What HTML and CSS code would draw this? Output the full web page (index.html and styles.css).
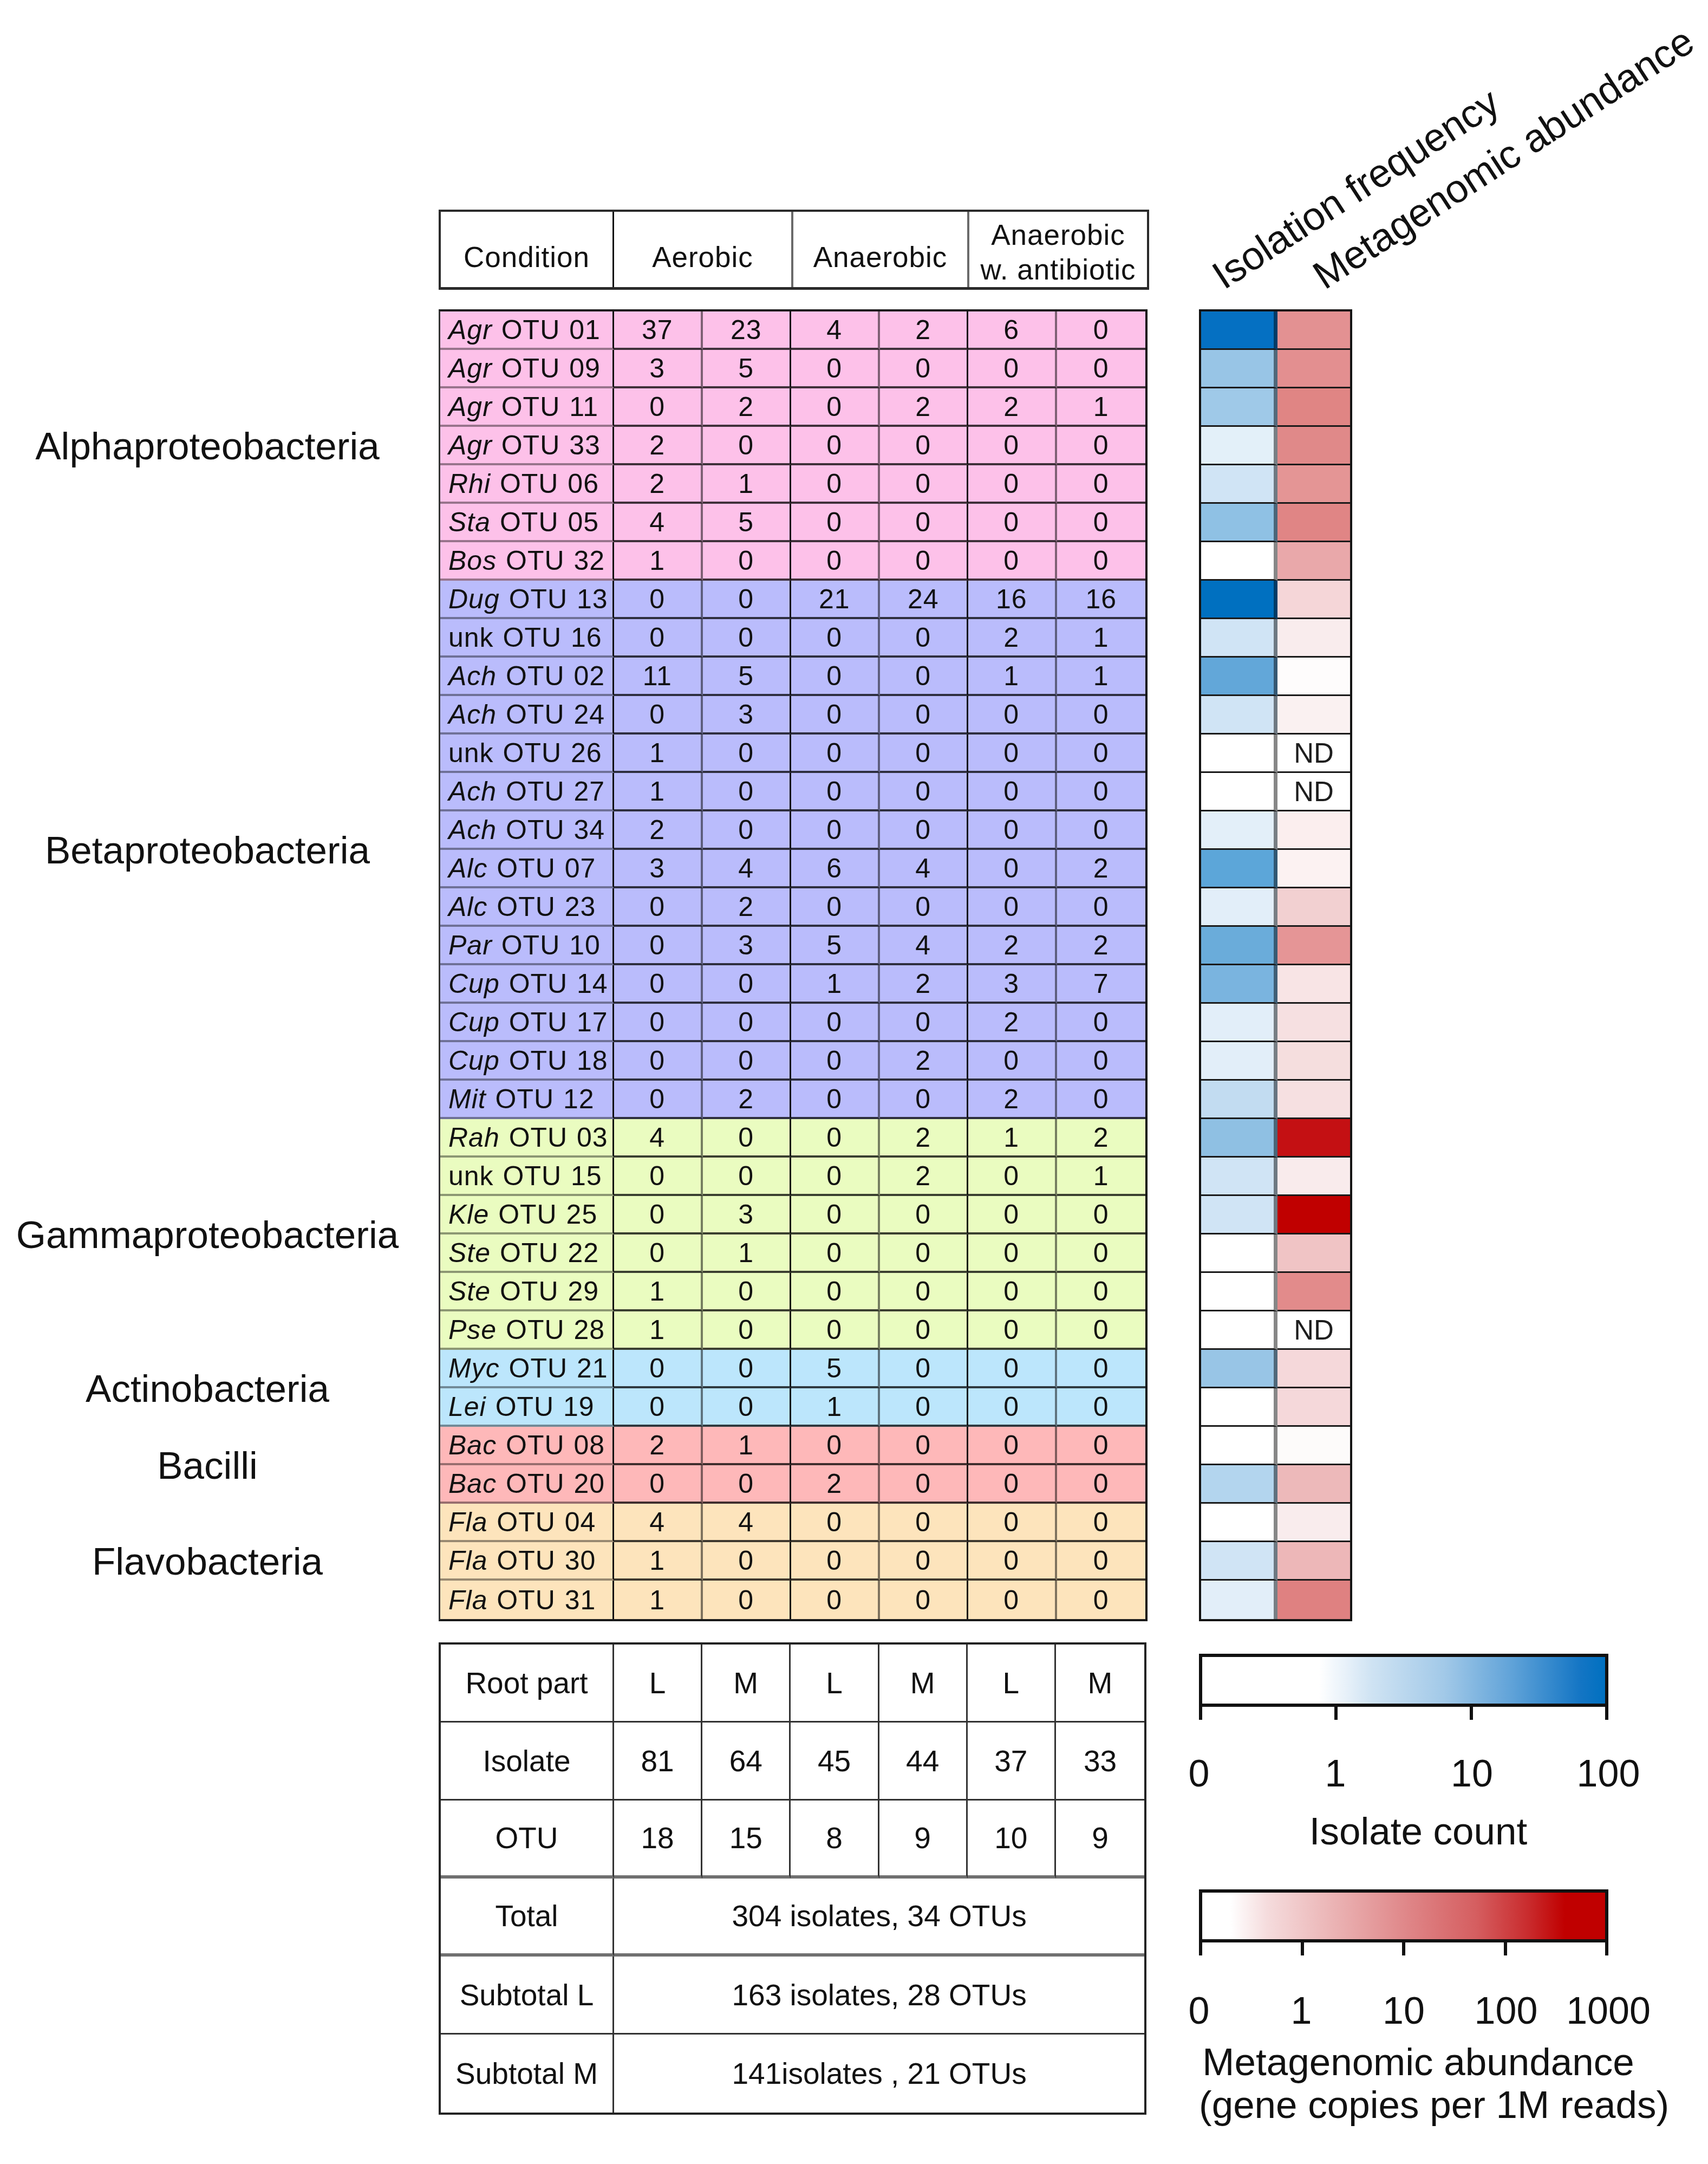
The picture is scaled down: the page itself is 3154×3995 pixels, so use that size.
FILE: index.html
```html
<!DOCTYPE html>
<html lang="en">
<head>
<meta charset="utf-8">
<title>Isolation frequency and metagenomic abundance</title>
<link rel="stylesheet" href="styles.css">
</head>
<body>
<div class="figure">

  <div class="hdr">
    <div class="hc c1 low">Condition</div>
    <div class="hc c2 low">Aerobic</div>
    <div class="hc c3 low">Anaerobic</div>
    <div class="hc c4">Anaerobic<br>w. antibiotic</div>
  </div>

  <div class="rothead">
    <span class="rot rot1">Isolation frequency</span>
    <span class="rot rot2">Metagenomic abundance</span>
  </div>

  <div class="groups">
    <div class="grp s7">Alphaproteobacteria</div>
    <div class="grp s14">Betaproteobacteria</div>
    <div class="grp s6">Gammaproteobacteria</div>
    <div class="grp s2">Actinobacteria</div>
    <div class="grp s2">Bacilli</div>
    <div class="grp s3">Flavobacteria</div>
  </div>

  <div class="data">
    <div class="row ga"><div class="n"><span><i>Agr</i> OTU 01</span></div><div class="v p">37</div><div class="v q">23</div><div class="v p">4</div><div class="v q">2</div><div class="v p">6</div><div class="v e">0</div></div>
    <div class="row ga"><div class="n"><span><i>Agr</i> OTU 09</span></div><div class="v p">3</div><div class="v q">5</div><div class="v p">0</div><div class="v q">0</div><div class="v p">0</div><div class="v e">0</div></div>
    <div class="row ga"><div class="n"><span><i>Agr</i> OTU 11</span></div><div class="v p">0</div><div class="v q">2</div><div class="v p">0</div><div class="v q">2</div><div class="v p">2</div><div class="v e">1</div></div>
    <div class="row ga"><div class="n"><span><i>Agr</i> OTU 33</span></div><div class="v p">2</div><div class="v q">0</div><div class="v p">0</div><div class="v q">0</div><div class="v p">0</div><div class="v e">0</div></div>
    <div class="row ga"><div class="n"><span><i>Rhi</i> OTU 06</span></div><div class="v p">2</div><div class="v q">1</div><div class="v p">0</div><div class="v q">0</div><div class="v p">0</div><div class="v e">0</div></div>
    <div class="row ga"><div class="n"><span><i>Sta</i> OTU 05</span></div><div class="v p">4</div><div class="v q">5</div><div class="v p">0</div><div class="v q">0</div><div class="v p">0</div><div class="v e">0</div></div>
    <div class="row ga"><div class="n"><span><i>Bos</i> OTU 32</span></div><div class="v p">1</div><div class="v q">0</div><div class="v p">0</div><div class="v q">0</div><div class="v p">0</div><div class="v e">0</div></div>

    <div class="row gb"><div class="n"><span><i>Dug</i> OTU 13</span></div><div class="v p">0</div><div class="v q">0</div><div class="v p">21</div><div class="v q">24</div><div class="v p">16</div><div class="v e">16</div></div>
    <div class="row gb"><div class="n"><span>unk OTU 16</span></div><div class="v p">0</div><div class="v q">0</div><div class="v p">0</div><div class="v q">0</div><div class="v p">2</div><div class="v e">1</div></div>
    <div class="row gb"><div class="n"><span><i>Ach</i> OTU 02</span></div><div class="v p">11</div><div class="v q">5</div><div class="v p">0</div><div class="v q">0</div><div class="v p">1</div><div class="v e">1</div></div>
    <div class="row gb"><div class="n"><span><i>Ach</i> OTU 24</span></div><div class="v p">0</div><div class="v q">3</div><div class="v p">0</div><div class="v q">0</div><div class="v p">0</div><div class="v e">0</div></div>
    <div class="row gb"><div class="n"><span>unk OTU 26</span></div><div class="v p">1</div><div class="v q">0</div><div class="v p">0</div><div class="v q">0</div><div class="v p">0</div><div class="v e">0</div></div>
    <div class="row gb"><div class="n"><span><i>Ach</i> OTU 27</span></div><div class="v p">1</div><div class="v q">0</div><div class="v p">0</div><div class="v q">0</div><div class="v p">0</div><div class="v e">0</div></div>
    <div class="row gb"><div class="n"><span><i>Ach</i> OTU 34</span></div><div class="v p">2</div><div class="v q">0</div><div class="v p">0</div><div class="v q">0</div><div class="v p">0</div><div class="v e">0</div></div>
    <div class="row gb"><div class="n"><span><i>Alc</i> OTU 07</span></div><div class="v p">3</div><div class="v q">4</div><div class="v p">6</div><div class="v q">4</div><div class="v p">0</div><div class="v e">2</div></div>
    <div class="row gb"><div class="n"><span><i>Alc</i> OTU 23</span></div><div class="v p">0</div><div class="v q">2</div><div class="v p">0</div><div class="v q">0</div><div class="v p">0</div><div class="v e">0</div></div>
    <div class="row gb"><div class="n"><span><i>Par</i> OTU 10</span></div><div class="v p">0</div><div class="v q">3</div><div class="v p">5</div><div class="v q">4</div><div class="v p">2</div><div class="v e">2</div></div>
    <div class="row gb"><div class="n"><span><i>Cup</i> OTU 14</span></div><div class="v p">0</div><div class="v q">0</div><div class="v p">1</div><div class="v q">2</div><div class="v p">3</div><div class="v e">7</div></div>
    <div class="row gb"><div class="n"><span><i>Cup</i> OTU 17</span></div><div class="v p">0</div><div class="v q">0</div><div class="v p">0</div><div class="v q">0</div><div class="v p">2</div><div class="v e">0</div></div>
    <div class="row gb"><div class="n"><span><i>Cup</i> OTU 18</span></div><div class="v p">0</div><div class="v q">0</div><div class="v p">0</div><div class="v q">2</div><div class="v p">0</div><div class="v e">0</div></div>
    <div class="row gb"><div class="n"><span><i>Mit</i> OTU 12</span></div><div class="v p">0</div><div class="v q">2</div><div class="v p">0</div><div class="v q">0</div><div class="v p">2</div><div class="v e">0</div></div>

    <div class="row gg"><div class="n"><span><i>Rah</i> OTU 03</span></div><div class="v p">4</div><div class="v q">0</div><div class="v p">0</div><div class="v q">2</div><div class="v p">1</div><div class="v e">2</div></div>
    <div class="row gg"><div class="n"><span>unk OTU 15</span></div><div class="v p">0</div><div class="v q">0</div><div class="v p">0</div><div class="v q">2</div><div class="v p">0</div><div class="v e">1</div></div>
    <div class="row gg"><div class="n"><span><i>Kle</i> OTU 25</span></div><div class="v p">0</div><div class="v q">3</div><div class="v p">0</div><div class="v q">0</div><div class="v p">0</div><div class="v e">0</div></div>
    <div class="row gg"><div class="n"><span><i>Ste</i> OTU 22</span></div><div class="v p">0</div><div class="v q">1</div><div class="v p">0</div><div class="v q">0</div><div class="v p">0</div><div class="v e">0</div></div>
    <div class="row gg"><div class="n"><span><i>Ste</i> OTU 29</span></div><div class="v p">1</div><div class="v q">0</div><div class="v p">0</div><div class="v q">0</div><div class="v p">0</div><div class="v e">0</div></div>
    <div class="row gg"><div class="n"><span><i>Pse</i> OTU 28</span></div><div class="v p">1</div><div class="v q">0</div><div class="v p">0</div><div class="v q">0</div><div class="v p">0</div><div class="v e">0</div></div>

    <div class="row gc"><div class="n"><span><i>Myc</i> OTU 21</span></div><div class="v p">0</div><div class="v q">0</div><div class="v p">5</div><div class="v q">0</div><div class="v p">0</div><div class="v e">0</div></div>
    <div class="row gc"><div class="n"><span><i>Lei</i> OTU 19</span></div><div class="v p">0</div><div class="v q">0</div><div class="v p">1</div><div class="v q">0</div><div class="v p">0</div><div class="v e">0</div></div>

    <div class="row gr"><div class="n"><span><i>Bac</i> OTU 08</span></div><div class="v p">2</div><div class="v q">1</div><div class="v p">0</div><div class="v q">0</div><div class="v p">0</div><div class="v e">0</div></div>
    <div class="row gr"><div class="n"><span><i>Bac</i> OTU 20</span></div><div class="v p">0</div><div class="v q">0</div><div class="v p">2</div><div class="v q">0</div><div class="v p">0</div><div class="v e">0</div></div>

    <div class="row gf"><div class="n"><span><i>Fla</i> OTU 04</span></div><div class="v p">4</div><div class="v q">4</div><div class="v p">0</div><div class="v q">0</div><div class="v p">0</div><div class="v e">0</div></div>
    <div class="row gf"><div class="n"><span><i>Fla</i> OTU 30</span></div><div class="v p">1</div><div class="v q">0</div><div class="v p">0</div><div class="v q">0</div><div class="v p">0</div><div class="v e">0</div></div>
    <div class="row gf"><div class="n"><span><i>Fla</i> OTU 31</span></div><div class="v p">1</div><div class="v q">0</div><div class="v p">0</div><div class="v q">0</div><div class="v p">0</div><div class="v e">0</div></div>
  </div>

  <div class="heat">
    <div class="hrow"><div class="hb" style="background:#0570c2"></div><div class="hr" style="background:#e39192"></div></div>
    <div class="hrow"><div class="hb" style="background:#98c5e6"></div><div class="hr" style="background:#e38f90"></div></div>
    <div class="hrow"><div class="hb" style="background:#9fc9e8"></div><div class="hr" style="background:#e08584"></div></div>
    <div class="hrow"><div class="hb" style="background:#e3f0f9"></div><div class="hr" style="background:#e08989"></div></div>
    <div class="hrow"><div class="hb" style="background:#d0e4f5"></div><div class="hr" style="background:#e49595"></div></div>
    <div class="hrow"><div class="hb" style="background:#8fc1e4"></div><div class="hr" style="background:#e08585"></div></div>
    <div class="hrow"><div class="hb" style="background:#ffffff"></div><div class="hr" style="background:#e9a8aa"></div></div>
    <div class="hrow"><div class="hb" style="background:#0070c0"></div><div class="hr" style="background:#f5d6d8"></div></div>
    <div class="hrow"><div class="hb" style="background:#d0e4f5"></div><div class="hr" style="background:#f9eced"></div></div>
    <div class="hrow"><div class="hb" style="background:#62a7d9"></div><div class="hr" style="background:#fefcfc"></div></div>
    <div class="hrow"><div class="hb" style="background:#d0e4f5"></div><div class="hr" style="background:#faf1f1"></div></div>
    <div class="hrow"><div class="hb" style="background:#ffffff"></div><div class="hr nd">ND</div></div>
    <div class="hrow"><div class="hb" style="background:#ffffff"></div><div class="hr nd">ND</div></div>
    <div class="hrow"><div class="hb" style="background:#e3eff9"></div><div class="hr" style="background:#fbeeee"></div></div>
    <div class="hrow"><div class="hb" style="background:#5ca6d9"></div><div class="hr" style="background:#fcf2f2"></div></div>
    <div class="hrow"><div class="hb" style="background:#e2eef9"></div><div class="hr" style="background:#f2d0d1"></div></div>
    <div class="hrow"><div class="hb" style="background:#6aacda"></div><div class="hr" style="background:#e59596"></div></div>
    <div class="hrow"><div class="hb" style="background:#7ab4df"></div><div class="hr" style="background:#f8e4e5"></div></div>
    <div class="hrow"><div class="hb" style="background:#e2eef9"></div><div class="hr" style="background:#f6e0e1"></div></div>
    <div class="hrow"><div class="hb" style="background:#e2eef9"></div><div class="hr" style="background:#f5dede"></div></div>
    <div class="hrow"><div class="hb" style="background:#c2dcf1"></div><div class="hr" style="background:#f6e0e1"></div></div>
    <div class="hrow"><div class="hb" style="background:#8fc0e3"></div><div class="hr" style="background:#c41013"></div></div>
    <div class="hrow"><div class="hb" style="background:#d0e4f5"></div><div class="hr" style="background:#f9ebec"></div></div>
    <div class="hrow"><div class="hb" style="background:#d0e4f5"></div><div class="hr" style="background:#c00000"></div></div>
    <div class="hrow"><div class="hb" style="background:#ffffff"></div><div class="hr" style="background:#f0c4c5"></div></div>
    <div class="hrow"><div class="hb" style="background:#ffffff"></div><div class="hr" style="background:#e28b8b"></div></div>
    <div class="hrow"><div class="hb" style="background:#ffffff"></div><div class="hr nd">ND</div></div>
    <div class="hrow"><div class="hb" style="background:#98c5e6"></div><div class="hr" style="background:#f5d8da"></div></div>
    <div class="hrow"><div class="hb" style="background:#ffffff"></div><div class="hr" style="background:#f5d8da"></div></div>
    <div class="hrow"><div class="hb" style="background:#ffffff"></div><div class="hr" style="background:#fdfbfa"></div></div>
    <div class="hrow"><div class="hb" style="background:#b3d5ee"></div><div class="hr" style="background:#edb9ba"></div></div>
    <div class="hrow"><div class="hb" style="background:#ffffff"></div><div class="hr" style="background:#f9eced"></div></div>
    <div class="hrow"><div class="hb" style="background:#d0e4f5"></div><div class="hr" style="background:#edb7b8"></div></div>
    <div class="hrow"><div class="hb" style="background:#e2eef9"></div><div class="hr" style="background:#df8181"></div></div>
  </div>

  <div class="sum">
    <div class="sc">Root part</div><div class="sc">L</div><div class="sc">M</div><div class="sc">L</div><div class="sc">M</div><div class="sc">L</div><div class="sc e">M</div>
    <div class="sc">Isolate</div><div class="sc">81</div><div class="sc">64</div><div class="sc">45</div><div class="sc">44</div><div class="sc">37</div><div class="sc e">33</div>
    <div class="sc k">OTU</div><div class="sc k">18</div><div class="sc k">15</div><div class="sc k">8</div><div class="sc k">9</div><div class="sc k">10</div><div class="sc k e">9</div>
    <div class="sc k">Total</div><div class="sc k e wide">304 isolates, 34 OTUs</div>
    <div class="sc">Subtotal L</div><div class="sc e wide">163 isolates, 28 OTUs</div>
    <div class="sc b">Subtotal M</div><div class="sc b e wide">141isolates , 21 OTUs</div>
  </div>

  <div class="legend">
    <div class="bar blue"></div>
    <div class="ticks"><span class="tk"></span><span class="tk"></span><span class="tk"></span><span class="tk"></span></div>
    <div class="tlabels"><span>0</span><span>1</span><span>10</span><span>100</span></div>
    <div class="ltitle">Isolate count</div>

    <div class="bar red"></div>
    <div class="ticks"><span class="tk"></span><span class="tk"></span><span class="tk"></span><span class="tk"></span><span class="tk"></span></div>
    <div class="tlabels l2"><span>0</span><span>1</span><span>10</span><span>100</span><span>1000</span></div>
    <div class="ltitle two">Metagenomic abundance<br>(gene copies per 1M reads)</div>
  </div>

</div>
</body>
</html>
```

FILE: styles.css
```css
* { box-sizing: border-box; }

html, body {
  margin: 0;
  padding: 0;
  background: #ffffff;
}

body {
  font-family: "Liberation Sans", Arial, Helvetica, sans-serif;
  color: #111111;
}

.figure {
  width: 3154px;
  height: 3995px;
  padding-top: 387px;
  display: grid;
  grid-template-columns: 766px 44px 1312px 92px 940px;
  grid-template-rows: 148px 36px auto 39px auto;
  align-content: start;
}

/* ---------- header table ---------- */
.hdr {
  grid-column: 3;
  grid-row: 1;
  display: grid;
  grid-template-columns: 320px 331px 325px 328px;
  border: 4px solid #2a2a2a;
  border-bottom-width: 5px;
  height: 148px;
}

.hc {
  display: flex;
  align-items: center;
  justify-content: center;
  text-align: center;
  font-size: 53px;
  letter-spacing: 1px;
  line-height: 64px;
  padding-top: 11px;
}

.hc.low { padding-top: 29px; }
.c1 { border-right: 3px solid #111111; }
.c2, .c3 { border-right: 4px solid #6a6a6a; }

/* ---------- rotated heatmap headers ---------- */
.rothead {
  grid-column: 5;
  grid-row: 1;
  position: relative;
}

.rot {
  position: absolute;
  top: 87px;
  font-size: 73px;
  line-height: 1;
  white-space: nowrap;
  transform-origin: 0 61.8px;
  transform: rotate(-33deg);
}

.rot1 { left: 46px; }
.rot2 { left: 232px; }

/* ---------- group labels ---------- */
.groups {
  grid-column: 1;
  grid-row: 3;
  display: grid;
  grid-template-rows: repeat(34, 71px);
  padding-top: 4px;
}

.grp {
  display: flex;
  align-items: center;
  justify-content: center;
  font-size: 71px;
  white-space: nowrap;
}

.s7 { grid-row: span 7; }
.s14 { grid-row: span 14; }
.s6 { grid-row: span 6; }
.s3 { grid-row: span 3; }
.s2 { grid-row: span 2; }

/* ---------- data table ---------- */
.data {
  grid-column: 3;
  grid-row: 3;
  align-self: start;
  width: 1309px;
  border-top: 4px solid #1a1a1a;
  border-bottom: 4px solid #1a1a1a;
  border-left: 3px solid rgba(0, 0, 0, 0.8);
  border-right: 4px solid #111111;
}

.row {
  display: grid;
  grid-template-columns: 321px repeat(6, 163.5px);
  height: 71px;
  font-size: 50px;
  letter-spacing: 1px;
  line-height: 1;
}

.row > div {
  display: flex;
  align-items: center;
  justify-content: center;
  border-bottom: 4px solid rgba(0, 0, 0, 0.75);
}

.row > .n {
  justify-content: flex-start;
  padding-left: 15px;
  white-space: nowrap;
  border-right: 3px solid #111111;
  border-bottom-color: rgba(0, 0, 0, 0.4);
  word-spacing: 2px;
}

.row > .p { border-right: 4px solid rgba(0, 0, 0, 0.5); }
.row > .q { border-right: 3px solid #111111; }

.row:last-child > div { border-bottom: none; }

.row .n i { font-style: italic; }

.ga { background: #fdc1e9; }
.gb { background: #babcfc; }
.gg { background: #eafcc0; }
.gc { background: #bce6fc; }
.gr { background: #feb8b9; }
.gf { background: #fde4bc; }

/* ---------- heatmap ---------- */
.heat {
  grid-column: 5;
  grid-row: 3;
  align-self: start;
  width: 283px;
  border: 4px solid #141414;
}

.hrow {
  display: grid;
  grid-template-columns: 141px 134px;
  height: 71px;
}

.hb {
  border-right: 7px solid rgba(0, 0, 0, 0.47);
  border-bottom: 3px solid #1a1a1a;
}

.hr {
  border-bottom: 3px solid #1a1a1a;
}

.hrow:last-child > div { border-bottom: none; }

.nd {
  background: #ffffff;
  display: flex;
  align-items: center;
  justify-content: center;
  font-size: 51px;
  color: #1e1e1e;
}

/* ---------- summary table ---------- */
.sum {
  grid-column: 3;
  grid-row: 5;
  align-self: start;
  width: 1307px;
  display: grid;
  grid-template-columns: 320px repeat(6, 163.2px);
  grid-auto-rows: 144px;
  border: 4px solid #222222;
}

.sc {
  display: flex;
  align-items: center;
  justify-content: center;
  font-size: 55px;
  white-space: nowrap;
  border-right: 3px solid #333333;
  border-bottom: 3px solid #333333;
}

.sc.e { border-right: none; }
.sc.k { border-bottom: 6px solid #707070; }
.sc.b { border-bottom: none; }
.sc.wide { grid-column: span 6; }

/* ---------- legends ---------- */
.legend {
  grid-column: 5;
  grid-row: 5;
  display: flex;
  flex-direction: column;
  align-items: flex-start;
  padding-top: 21px;
}

.bar {
  width: 756px;
  height: 98px;
  border: 6px solid #111111;
}

.bar.blue {
  background: linear-gradient(to right,
    #ffffff 0%, #ffffff 29%, #e6f0f9 36%, #cfe3f3 42%,
    #a2c9e8 60%, #5fa2d8 77%, #1375c4 94%, #0070c0 100%);
}

.bar.red {
  margin-top: 67px;
  background: linear-gradient(to right,
    #ffffff 0%, #ffffff 7%, #f5dcdd 16%, #eab0b1 34%,
    #df8688 51%, #d55e60 68%, #c92b2d 81%, #c00000 90%, #c00000 100%);
}

.ticks {
  width: 756px;
  height: 24px;
  display: flex;
  justify-content: space-between;
}

.tk {
  display: block;
  width: 6px;
  height: 24px;
  background: #111111;
}

.tlabels {
  width: 756px;
  height: 80px;
  margin-top: 59px;
  display: flex;
  justify-content: space-between;
  font-size: 70px;
  line-height: 80px;
}

.tlabels.l2 { margin-top: 62px; }

.tlabels span {
  width: 0;
  display: flex;
  justify-content: center;
  white-space: nowrap;
}

.ltitle {
  width: 810px;
  margin-top: 27px;
  text-align: center;
  font-size: 71px;
  line-height: 80px;
  white-space: nowrap;
}

.ltitle.two {
  margin-top: 15px;
  line-height: 79px;
}
```
